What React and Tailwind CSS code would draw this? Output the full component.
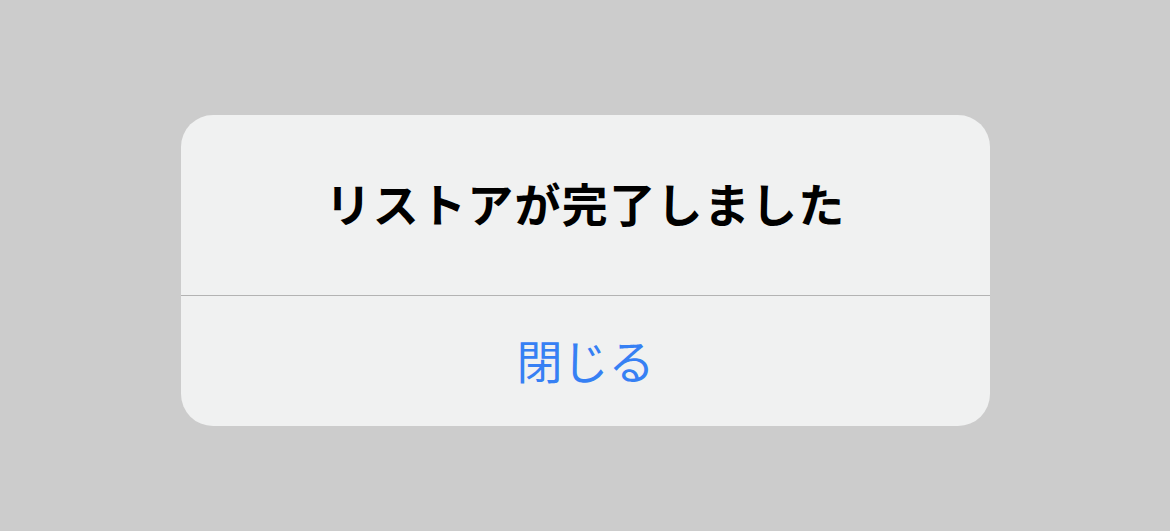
export default function App() {
  return (
    <div className="w-[1170px] h-[531px] bg-[#cccccc] flex justify-start pl-[181px] pt-[115px]" style={{ fontFamily: '"Noto Sans CJK JP", "Noto Sans", sans-serif' }}>
      <div className="w-[809px] h-[311px] bg-[#f0f1f1] rounded-[32px] flex flex-col overflow-hidden">
        <div className="h-[180px] flex items-center justify-center pb-[6px]">
          <span className="text-[46px] font-bold text-black leading-none tracking-[1.3px]">リストアが完了しました</span>
        </div>
        <div className="h-px bg-[#b3b3b3]"></div>
        <div className="flex-1 flex items-center justify-center pb-[4px]">
          <span className="text-[46px] font-normal text-[#3680f4] leading-none">閉じる</span>
        </div>
      </div>
    </div>
  );
}
